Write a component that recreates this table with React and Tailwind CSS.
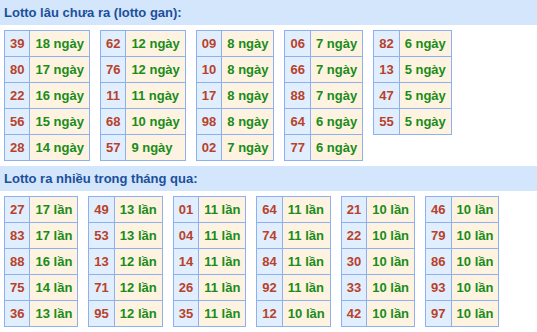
import React from 'react';

const gan = [
  [['39', 18], ['80', 17], ['22', 16], ['56', 15], ['28', 14]],
  [['62', 12], ['76', 12], ['11', 11], ['68', 10], ['57', 9]],
  [['09', 8], ['10', 8], ['17', 8], ['98', 8], ['02', 7]],
  [['06', 7], ['66', 7], ['88', 7], ['64', 6], ['77', 6]],
  [['82', 6], ['13', 5], ['47', 5], ['55', 5]],
];

const nhieu = [
  [['27', 17], ['83', 17], ['88', 16], ['75', 14], ['36', 13]],
  [['49', 13], ['53', 13], ['13', 12], ['71', 12], ['95', 12]],
  [['01', 11], ['04', 11], ['14', 11], ['26', 11], ['35', 11]],
  [['64', 11], ['74', 11], ['84', 11], ['92', 11], ['12', 10]],
  [['21', 10], ['22', 10], ['30', 10], ['33', 10], ['42', 10]],
  [['46', 10], ['79', 10], ['86', 10], ['93', 10], ['97', 10]],
];

const Header = ({ children }) => (
  <div className="h-[25px] bg-[#d3e6fb] px-[4px] flex items-center text-[13px] font-bold text-[#1c4f9c]">
    {children}
  </div>
);

const LottoTable = ({ rows, unit }) => (
  <table className="border-collapse self-start">
    <tbody>
      {rows.map(([num, count], i) => (
        <tr key={i} className="h-[26px]">
          <td className="border border-[#8cb0f0] bg-[#e1eefe] px-[5px] text-center text-[#b8412a]">
            {num}
          </td>
          <td className="border border-[#8cb0f0] bg-[#fef3e1] px-[5px] text-left text-[#198c19]">
            {count} {unit}
          </td>
        </tr>
      ))}
    </tbody>
  </table>
);

const App = () => {
  return (
    <div
      className="w-[537px] h-[332px] bg-white overflow-hidden text-[13px] font-bold"
      style={{ fontFamily: '"Liberation Sans", Arial, sans-serif' }}
    >
      <Header>Lotto lâu chưa ra (lotto gan):</Header>
      <div className="flex gap-[10px] px-[4px] mt-[5px]">
        {gan.map((rows, i) => (
          <LottoTable key={i} rows={rows} unit="ngày" />
        ))}
      </div>
      <div className="mt-[5px]">
        <Header>Lotto ra nhiều trong tháng qua:</Header>
      </div>
      <div className="flex gap-[10px] px-[4px] mt-[5px]">
        {nhieu.map((rows, i) => (
          <LottoTable key={i} rows={rows} unit="lần" />
        ))}
      </div>
    </div>
  );
};

export default App;
